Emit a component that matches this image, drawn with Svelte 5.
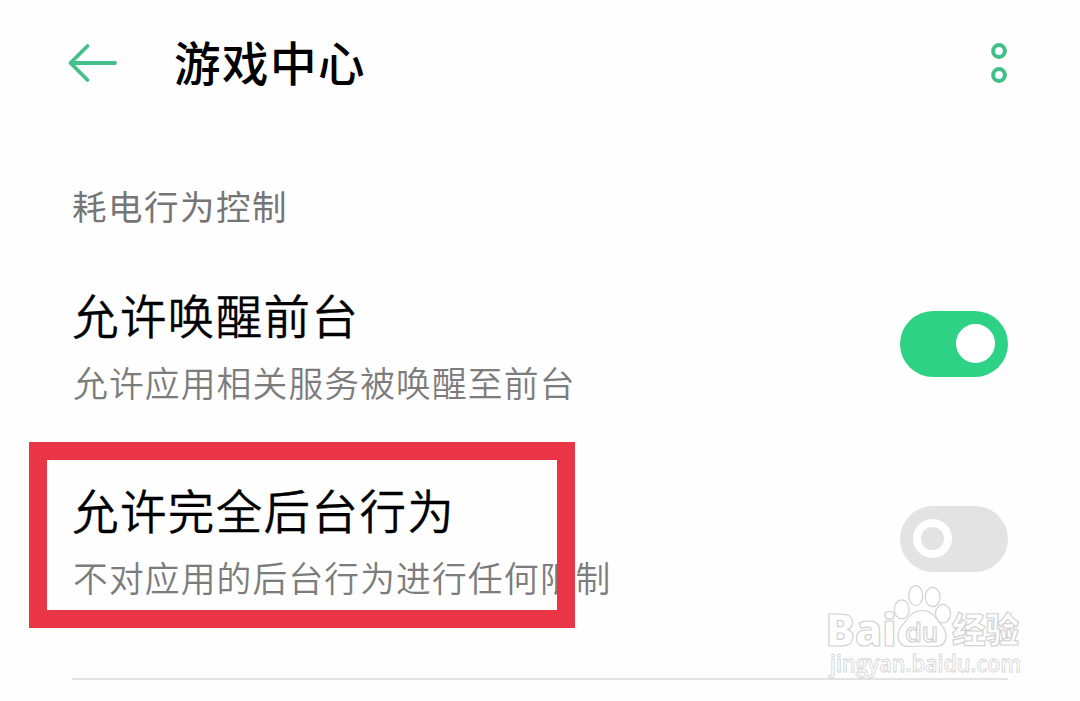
<script lang="ts">
  interface Setting {
    title: string;
    desc: string;
    on: boolean;
    marked: boolean;
  }

  let settings: Setting[] = $state([
    { title: "允许唤醒前台", desc: "允许应用相关服务被唤醒至前台", on: true, marked: false },
    { title: "允许完全后台行为", desc: "不对应用的后台行为进行任何限制", on: false, marked: true },
  ]);
</script>

<div class="page">
  <header class="header">
    <button class="icon-btn" aria-label="返回">
      <svg width="50" height="40" viewBox="0 0 50 40" fill="none">
        <path
          d="M20.500 3 3.500 20l17 17M3.500 20H48"
          stroke="#45bf89"
          stroke-width="3.8"
          stroke-linecap="round"
          stroke-linejoin="round"
        />
      </svg>
    </button>
    <h1>游戏中心</h1>
    <button class="icon-btn" aria-label="更多">
      <svg width="18" height="42" viewBox="0 0 18 42" fill="none" stroke="#3fbe86" stroke-width="4">
        <circle cx="9" cy="9" r="5.9" />
        <circle cx="9" cy="33" r="5.9" />
      </svg>
    </button>
  </header>

  <h2>耗电行为控制</h2>

  <div class="list">
    {#each settings as item}
      <div class="row">
        <div class="text">
          <div class="title">{item.title}</div>
          <div class="desc">{item.desc}</div>
        </div>
        <button
          class="switch"
          class:on={item.on}
          role="switch"
          aria-checked={item.on}
          aria-label={item.title}
          onclick={() => (item.on = !item.on)}
        >
          <span class="knob"></span>
        </button>
        {#if item.marked}
          <div class="mark"></div>
        {/if}
      </div>
    {/each}
  </div>

  <svg class="watermark" width="220" height="117" viewBox="0 0 220 117">
    <g fill="#fff" stroke="#d2d2d2" stroke-width="1.2">
      <text class="logo" x="1.500" y="61.500" textLength="71" lengthAdjust="spacingAndGlyphs">Bai</text>
      <ellipse cx="77.700" cy="25.300" rx="7.400" ry="9.500" />
      <ellipse cx="91.700" cy="11.700" rx="7" ry="10" />
      <ellipse cx="108.700" cy="13" rx="7.400" ry="9.700" />
      <ellipse cx="119" cy="29.700" rx="7.500" ry="9.300" />
      <path
        d="M98 26.500c8 0 12 4 15 9 3 4.500 9 8.500 9 16 0 7-4 11-11 11-5 0-8-.5-13-.5s-8 .5-13 .5c-7 0-11-4-11-11 0-7.500 6-11.500 9-16 3-5 7-9 15-9z"
      />
      <text class="du" x="81" y="57.500" textLength="33" lengthAdjust="spacingAndGlyphs">du</text>
      <text class="cjk" x="128" y="58.500" textLength="67" lengthAdjust="spacingAndGlyphs">经验</text>
      <text class="url" x="6" y="87.500" textLength="191" lengthAdjust="spacingAndGlyphs">jingyan.baidu.com</text>
    </g>
  </svg>
</div>

<style>
  :global(body) {
    margin: 0;
    background: #fefefe;
  }
  .page {
    position: relative;
    box-sizing: border-box;
    width: 1080px;
    height: 701px;
    padding: 0 72px;
    overflow: hidden;
    background: #fefefe;
    color: #000;
    font-family: "Noto Sans CJK SC", sans-serif;
  }
  button {
    padding: 0;
    border: 0;
    background: none;
    cursor: pointer;
  }
  .header {
    display: flex;
    align-items: center;
    height: 126px;
    margin-left: -5px;
  }
  .icon-btn {
    display: flex;
  }
  h1 {
    flex: 1;
    margin: 0 0 5px 57px;
    font-size: 46.5px;
    font-weight: 500;
    letter-spacing: 1.5px;
    line-height: 72px;
  }
  h2 {
    margin: 55px 0 0;
    padding-bottom: 2px;
    color: #757575;
    font-size: 34.5px;
    font-weight: 400;
    letter-spacing: 1.5px;
    line-height: 48px;
  }
  .list {
    padding-top: 15px;
    height: 432px;
    border-bottom: 2px solid #e3e3e3;
  }
  .row {
    position: relative;
    display: flex;
    align-items: center;
    justify-content: space-between;
    height: 195px;
  }
  .title {
    font-size: 46.5px;
    font-weight: 350;
    letter-spacing: 1.4px;
    line-height: 72px;
    -webkit-text-stroke: 0.3px #000;
  }
  .desc {
    padding: 6px 0 2px 1px;
    color: #7c7c7c;
    font-size: 34.8px;
    font-weight: 350;
    letter-spacing: 1.1px;
    line-height: 52px;
  }
  .switch {
    display: flex;
    align-items: center;
    box-sizing: border-box;
    width: 108px;
    height: 66px;
    padding: 0 13px;
    border-radius: 33px;
    background: #e3e3e3;
  }
  .knob {
    box-sizing: border-box;
    width: 39px;
    height: 39px;
    border: 8px solid #fff;
    border-radius: 50%;
  }
  .switch.on {
    justify-content: flex-end;
    background: #2dd284;
  }
  .switch.on .knob {
    background: #fff;
  }
  .mark {
    position: absolute;
    top: 1px;
    left: -43px;
    box-sizing: border-box;
    width: 546px;
    height: 186px;
    border: 18px solid #e93546;
    pointer-events: none;
  }
  .watermark {
    position: absolute;
    left: 824px;
    top: 584px;
    pointer-events: none;
  }
  .logo {
    font: 800 45px "Open Sans", sans-serif;
  }
  .du {
    font: 500 27px "Inter", sans-serif;
  }
  .cjk {
    font: 900 35px "Noto Sans CJK SC", sans-serif;
  }
  .url {
    font: 600 23.5px "Open Sans", sans-serif;
    stroke-width: 0.8px;
  }
</style>
